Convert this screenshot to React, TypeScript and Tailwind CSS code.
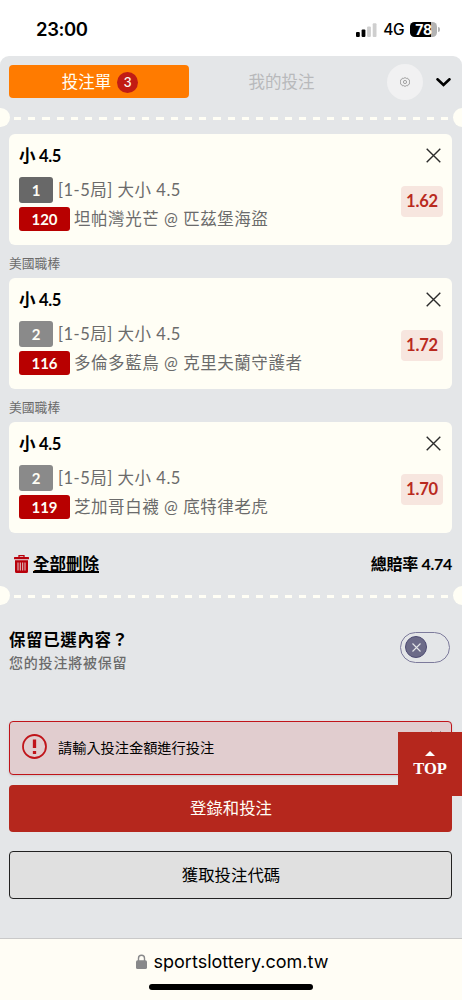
import { useState } from "react";

type Bet = {
  id: number;
  pick: string;
  rank: string;
  rankClass: string;
  market: string;
  code: string;
  match: string;
  odds: string;
};

const initialBets: Bet[] = [
  {
    id: 1,
    pick: "小 4.5",
    rank: "1",
    rankClass: "bg-[#686868]",
    market: "[1-5局] 大小 4.5",
    code: "120",
    match: "坦帕灣光芒 @ 匹茲堡海盜",
    odds: "1.62",
  },
  {
    id: 2,
    pick: "小 4.5",
    rank: "2",
    rankClass: "bg-[#8a8a8a]",
    market: "[1-5局] 大小 4.5",
    code: "116",
    match: "多倫多藍鳥 @ 克里夫蘭守護者",
    odds: "1.72",
  },
  {
    id: 3,
    pick: "小 4.5",
    rank: "2",
    rankClass: "bg-[#8a8a8a]",
    market: "[1-5局] 大小 4.5",
    code: "119",
    match: "芝加哥白襪 @ 底特律老虎",
    odds: "1.70",
  },
];

function StatusBar() {
  return (
    <div className="flex h-14 items-center justify-between bg-white pt-[3px] pr-[22px] pl-9 font-['Inter',sans-serif] text-black">
      <span className="text-[18.5px] font-semibold tracking-[-0.4px]">23:00</span>
      <div className="flex items-center">
        <svg width="21" height="14" viewBox="0 0 21 14">
          <rect x="0" y="9" width="3.8" height="5" rx="1" />
          <rect x="5.6" y="6.5" width="3.8" height="7.5" rx="1" />
          <rect x="11.1" y="3.6" width="3.8" height="10.4" rx="1" fill="#cfcfcf" />
          <rect x="16.7" y="0.2" width="3.8" height="13.8" rx="1" fill="#cfcfcf" />
        </svg>
        <span className="ml-[6px] text-[15.5px] font-medium tracking-[-0.5px]">4G</span>
        <div className="ml-1.5 flex items-center">
          <div className="flex h-[15px] w-[27px] items-center justify-center rounded-[4.5px] bg-[linear-gradient(90deg,#000_79%,#b3b3b3_79%)] text-[14px] font-bold tracking-[-0.3px] text-white">
            78
          </div>
          <div className="ml-px h-[5px] w-[2px] rounded-r-full bg-[#b3b3b3]" />
        </div>
      </div>
    </div>
  );
}

/* Ticket style separator with half circles on both ends */
function Perforation() {
  return (
    <div className="flex h-[19px] items-center justify-between overflow-hidden">
      <div className="-ml-[9.5px] size-[19px] shrink-0 rounded-full bg-[#fffef5]" />
      <div className="mx-[4.5px] mt-px h-[3px] grow bg-[repeating-linear-gradient(90deg,#fffef5_0_7.2px,transparent_7.2px_14.24px)]" />
      <div className="-mr-[9.5px] size-[19px] shrink-0 rounded-full bg-[#fffef5]" />
    </div>
  );
}

function BetCard({ bet, onRemove }: { bet: Bet; onRemove: () => void }) {
  return (
    <div className="flex h-[111px] items-start justify-between rounded-md bg-[#fffef5] pr-[9px] pl-[10px]">
      <div className="flex flex-col pt-3">
        <div className="h-[31px] text-[16.5px] leading-5 font-bold tracking-[-0.3px] text-black">{bet.pick}</div>
        <div className="flex h-[26px] items-center">
          <span
            className={`flex h-[26px] w-[34px] items-center justify-center rounded-[3px] text-[15px] font-bold text-[#fffef5] ${bet.rankClass}`}
          >
            {bet.rank}
          </span>
          <span className="ml-[5px] text-[16.5px] tracking-[0.5px] whitespace-nowrap text-[#6b6b6b]">{bet.market}</span>
        </div>
        <div className="mt-1 flex h-6 items-center">
          <span className="flex h-6 w-[51px] items-center justify-center rounded-[3px] bg-[#b80000] text-[15px] font-bold text-[#fffef5]">
            {bet.code}
          </span>
          <span className="ml-1 text-[16.5px] tracking-[0.55px] whitespace-nowrap text-[#6b6b6b]">{bet.match}</span>
        </div>
      </div>
      <div className="flex flex-col items-end">
        <button className="mt-[14px] mr-[2px]" onClick={onRemove} aria-label="移除">
          <svg width="15" height="15" viewBox="0 0 15 15" fill="none" stroke="#2b2b2b" strokeWidth={1.4}>
            <path d="M0.7 0.7l13.6 13.6M14.3 0.7L0.7 14.3" />
          </svg>
        </button>
        <span className="mt-[23px] flex h-[31px] w-[42px] items-center justify-center rounded bg-[#f7e6df] text-[16.5px] font-bold tracking-[-0.2px] text-[#b92a1e]">
          {bet.odds}
        </span>
      </div>
    </div>
  );
}

export default function App() {
  const [bets, setBets] = useState(initialBets);
  const [keep, setKeep] = useState(false);

  return (
    <div className="relative flex h-[1000px] w-[462px] flex-col overflow-hidden bg-white font-['Lato','Noto_Sans_CJK_TC',sans-serif]">
      <StatusBar />

      <main className="flex h-[882px] shrink-0 flex-col rounded-t-[9px] bg-[#e4e6e8]">
        {/* Tabs */}
        <div className="flex h-[52px] items-center pl-[9px]">
          <button className="-mt-px flex h-[33px] w-[180px] items-center justify-center gap-[6px] rounded bg-[#ff7b00] pt-px pl-[2px] text-[16.5px] text-[#fffef5]">
            投注單
            <span className="flex size-[21px] items-center justify-center rounded-full bg-[#c11c14] pt-px text-[13.5px] leading-none font-medium">
              {bets.length}
            </span>
          </button>
          <button className="w-[185px] text-center text-[16.5px] text-[#b8b9bb]">我的投注</button>
          <button className="ml-[13px] flex size-9 items-center justify-center rounded-full bg-[#f1f1f2]" aria-label="設定">
            <svg width="10" height="10" viewBox="0 0 20 20" fill="none" stroke="#999" strokeWidth={1.8}>
              <path d="M10 1l2.400 1.800 3-.4 1.200 2.700 2.700 1.200-.4 2.900L20 10l-1.100.8.4 3-2.700 1.100-1.200 2.700-3-.4L10 19l-2.400-1.800-3 .4-1.200-2.700-2.700-1.100.4-3L0 10l1.100-.8-.4-2.900 2.700-1.200 1.200-2.700 3 .4z" />
              <circle cx="10" cy="10" r="3.200" />
            </svg>
          </button>
          <button className="ml-[13px]" aria-label="收合">
            <svg width="15" height="9" viewBox="0 0 15 9" fill="none" stroke="#000" strokeWidth={2.6}>
              <path d="M1.5 1.3l6 5.700 6-5.700" strokeLinecap="round" />
            </svg>
          </button>
        </div>

        <Perforation />

        {/* Selections */}
        <div className="flex flex-col pt-[7px] pr-[10px] pl-[9px]">
          {bets.map((bet, i) => (
            <div key={bet.id}>
              {i > 0 && (
                <div className="flex h-[33px] items-center pt-[5px] text-[12.8px] text-[#6b6b6b]">美國職棒</div>
              )}
              <BetCard bet={bet} onRemove={() => setBets(bets.filter((b) => b.id !== bet.id))} />
            </div>
          ))}
        </div>

        <div className="flex h-[53px] items-center justify-between pt-[9px] pr-[10px] pl-[14px] text-black">
          <button className="flex items-center gap-1" onClick={() => setBets([])}>
            <svg className="-mt-px" width="15" height="18" viewBox="0 0 15 18">
              <path d="M5 2.500V0.700h5v1.800" fill="none" stroke="#b8000b" strokeWidth={1.300} />
              <rect x="0" y="2" width="15" height="2.200" rx="0.500" fill="#b8000b" />
              <path d="M1 5.300h13v11.200a1.500 1.500 0 0 1-1.500 1.500h-10A1.500 1.500 0 0 1 1 16.500z" fill="#b8000b" />
              <path d="M4 7.500v8M6.300 7.500v8M8.700 7.500v8M11 7.500v8" stroke="#e4e6e8" strokeWidth={0.900} />
            </svg>
            <span className="text-[16.5px] font-bold underline decoration-2 underline-offset-1">全部刪除</span>
          </button>
          <span className="text-[16px] font-bold tracking-[-0.3px]">總賠率 4.74</span>
        </div>

        <Perforation />

        {/* Keep selections toggle */}
        <div className="flex h-[84px] items-center justify-between pr-3 pl-[9px]">
          <div className="flex flex-col pt-[7px]">
            <span className="text-[16.5px] leading-[23px] font-bold tracking-[0.6px] text-black">保留已選內容？</span>
            <span className="text-[14px] leading-[21px] font-medium tracking-[0.8px] text-[#6b6b6b]">
              您的投注將被保留
            </span>
          </div>
          <button
            className={`flex h-[31px] w-[50px] items-center rounded-full border border-[#7c7a9b] px-1 ${keep ? "justify-end" : "justify-start"}`}
            onClick={() => setKeep(!keep)}
            aria-label="保留已選內容"
          >
            <span className="flex size-[22px] items-center justify-center rounded-full border border-[#4d4b72] bg-[#6c6b88]">
              <svg width="9" height="9" viewBox="0 0 9 9" stroke="#e4e6e8" strokeWidth={1.100}>
                <path d="M0.500 0.500l8 8M8.500 0.500l-8 8" />
              </svg>
            </span>
          </button>
        </div>

        {/* Alert and actions */}
        <div className="mt-8 flex flex-col pr-[10px] pl-[9px]">
          <div className="flex h-[54px] items-start justify-between rounded border border-[#c0141a] bg-[#e1cdcf] pr-[10px] pl-3 shadow-sm">
            <div className="flex h-full items-center">
              <svg className="-mt-1" width="25" height="25" viewBox="0 0 25 25" fill="none">
                <circle cx="12.500" cy="12.500" r="11.500" stroke="#c0141a" strokeWidth={1.800} />
                <path d="M12.500 5.500v8.500M12.500 17v3" stroke="#c0141a" strokeWidth={3.300} />
              </svg>
              <span className="ml-[11px] text-[14.2px] text-black">請輸入投注金額進行投注</span>
            </div>
            <svg className="mt-[9px]" width="10" height="10" viewBox="0 0 10 10" stroke="#555" strokeWidth={1}>
              <path d="M0.500 0.500l9 9M9.500 0.500l-9 9" />
            </svg>
          </div>
          <button className="mt-[10px] h-[47px] rounded bg-[#b5271d] pl-px text-[16.4px] text-[#fffef5]">登錄和投注</button>
          <button className="mt-[19px] h-[48px] rounded border border-[#222] bg-[#e0e0e0] pl-px text-[16.4px] text-black">
            獲取投注代碼
          </button>
        </div>
      </main>

      {/* Browser address bar */}
      <footer className="flex h-[62px] shrink-0 flex-col items-center border-t border-[#c9c9c9] bg-[#fffdf5] pt-[10px]">
        <div className="flex h-6 items-center gap-[7px] pl-[2px]">
          <svg width="11" height="15" viewBox="0 0 11 15">
            <path d="M2.500 7V4.200a3 3 0 0 1 6 0V7" fill="none" stroke="#88888a" strokeWidth={1.400} />
            <rect x="0" y="6.300" width="11" height="8.700" rx="1.600" fill="#88888a" />
          </svg>
          <span className="font-['Inter',sans-serif] text-[18px] text-black">sportslottery.com.tw</span>
        </div>
        <div className="mt-[11px] h-[6px] w-[164px] rounded-full bg-black" />
      </footer>

      <button className="absolute top-[732px] right-0 flex h-16 w-16 flex-col items-center bg-[#b5271d] pt-[19px] font-['Liberation_Serif',serif] text-[16.500px] leading-5 font-bold text-white">
        <svg width="10" height="5" viewBox="0 0 10 5" fill="#fff">
          <path d="M5 0l5 5H0z" />
        </svg>
        <span className="mt-[3px]">TOP</span>
      </button>
    </div>
  );
}
